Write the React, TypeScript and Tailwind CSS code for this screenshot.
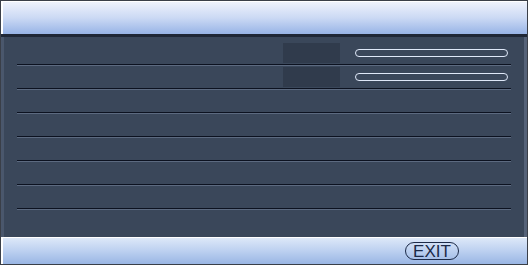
export default function App() {
  const rows = Array.from({ length: 8 });
  return (
    <div className="flex h-[265px] w-[528px] flex-col border border-[#3a3f48] bg-[#3a475a] font-['Liberation_Sans',Arial,sans-serif]">
      {/* header */}
      <div className="h-[33px] shrink-0 border-l-2 border-t border-white bg-gradient-to-b from-[#eef2fc] via-[#cbd9f4] to-[#98b4e6]" />
      <div className="h-[3px] shrink-0 bg-[#1f2736]" />
      {/* body */}
      <div className="flex flex-1 flex-col overflow-hidden border-l-[3px] border-r-[3px] border-l-[#4a576c] border-r-[#556278] pt-[5px]">
        {rows.map((_, i) => (
          <div key={i} className="flex h-[24px] shrink-0 flex-col pl-[13px] pr-[13px]">
            <div className="flex flex-1 items-center">
              {i < 2 && (
                <div className="ml-auto mr-[3px] flex items-center">
                  <div className="h-[20px] w-[57px] bg-[#303b4c]" />
                  <div className="ml-[15px] h-[8px] w-[153px] rounded-full border border-[#dfe8f8]" />
                </div>
              )}
            </div>
            {i < 7 && (
              <>
                <div className="h-px bg-[#0c1220]" />
                <div className="h-px bg-[#5c6a80]" />
              </>
            )}
          </div>
        ))}
      </div>
      {/* footer */}
      <div className="flex h-[27px] shrink-0 items-center justify-end border-l-2 border-t border-white bg-gradient-to-b from-[#dde8f8] via-[#bcd0f0] to-[#9ab6e4] pr-[68px]">
        <div className="flex h-[18px] w-[54px] items-center justify-center rounded-full border border-[#1c2a48] text-[17px] leading-none text-[#1c2a48]">
          EXIT
        </div>
      </div>
    </div>
  );
}
